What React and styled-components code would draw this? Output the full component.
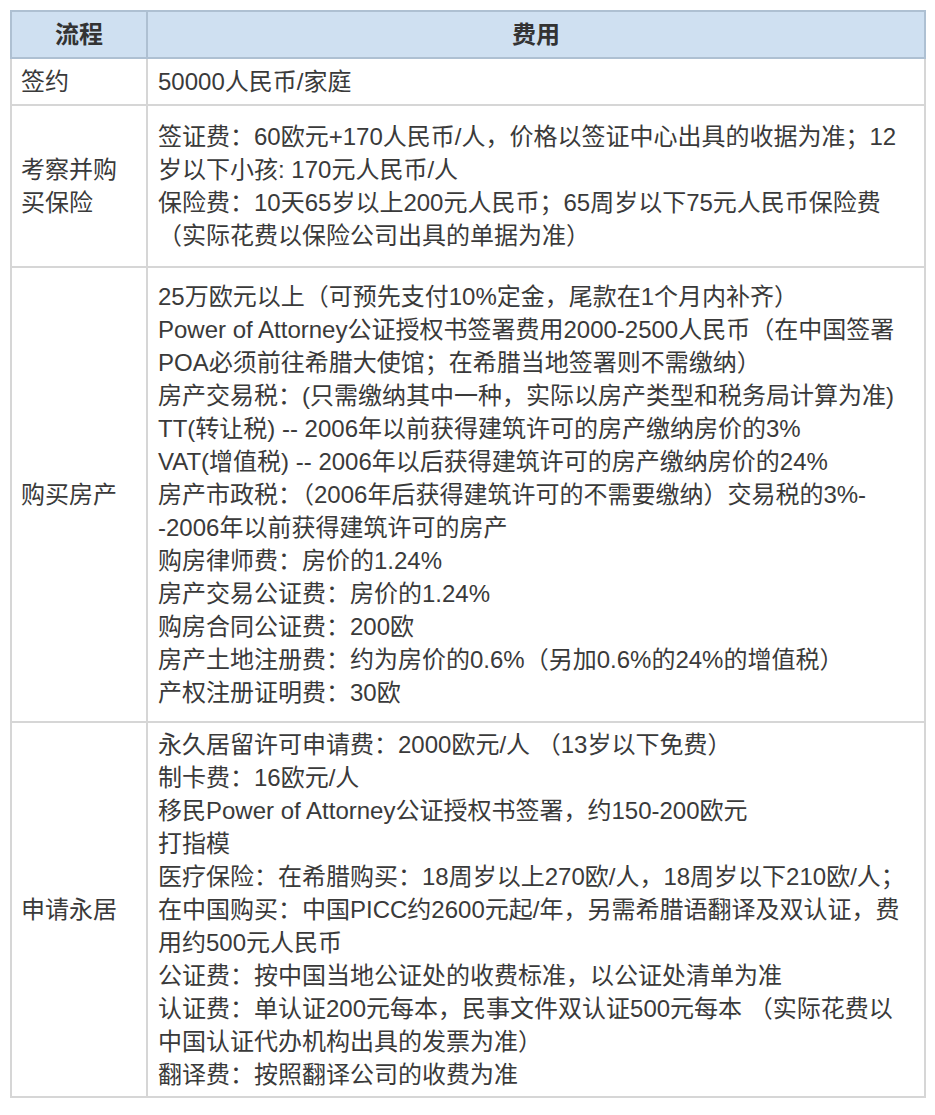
import styled, {createGlobalStyle} from "styled-components";

const GlobalStyle = createGlobalStyle`
	body {
		margin: 0;
		background: #ffffff;
		font-family: "Liberation Sans", "Noto Sans CJK SC", sans-serif;
		color: #3a3a3a;
	}
`

const Page = styled.div`
	padding: 10px 9px 10px 10px;
`

const FeeTable = styled.table`
	width: 916px;
	border-collapse: collapse;
	font-size: 24px;
	line-height: 33px;
`

const HeadCell = styled.th`
	background: #cfe0f1;
	border: 2px solid #aec0d2;
	padding: 6px 9px;
	font-weight: bold;
	text-align: center;
	color: #333333;
	width: ${({wide}) => wide ? 'auto' : '116px'};
`

const StepCell = styled.td`
	border: 2px solid #d6d6d6;
	padding: 0 9px;
	width: 116px;
	vertical-align: middle;
`

const FeeCell = styled.td`
	border: 2px solid #d6d6d6;
	padding: ${({pad}) => pad} 10px;
	vertical-align: middle;
`

const Line = styled.div`
	margin: 0;
`

const rows = [
	{
		step: '签约',
		pad: '6px',
		lines: ['50000人民币/家庭'],
	},
	{
		step: '考察并购买保险',
		pad: '14px',
		lines: [
			'签证费：60欧元+170人民币/人，价格以签证中心出具的收据为准；12岁以下小孩: 170元人民币/人',
			'保险费：10天65岁以上200元人民币；65周岁以下75元人民币保险费（实际花费以保险公司出具的单据为准）',
		],
	},
	{
		step: '购买房产',
		pad: '12px',
		lines: [
			'25万欧元以上（可预先支付10%定金，尾款在1个月内补齐）',
			'Power of Attorney公证授权书签署费用2000-2500人民币（在中国签署POA必须前往希腊大使馆；在希腊当地签署则不需缴纳）',
			'房产交易税：(只需缴纳其中一种，实际以房产类型和税务局计算为准)',
			'TT(转让税) -- 2006年以前获得建筑许可的房产缴纳房价的3%',
			'VAT(增值税) -- 2006年以后获得建筑许可的房产缴纳房价的24%',
			'房产市政税：（2006年后获得建筑许可的不需要缴纳）交易税的3%--2006年以前获得建筑许可的房产',
			'购房律师费：房价的1.24%',
			'房产交易公证费：房价的1.24%',
			'购房合同公证费：200欧',
			'房产土地注册费：约为房价的0.6%（另加0.6%的24%的增值税）',
			'产权注册证明费：30欧',
		],
	},
	{
		step: '申请永居',
		pad: '5px',
		lines: [
			'永久居留许可申请费：2000欧元/人 （13岁以下免费）',
			'制卡费：16欧元/人',
			'移民Power of Attorney公证授权书签署，约150-200欧元',
			'打指模',
			'医疗保险：在希腊购买：18周岁以上270欧/人，18周岁以下210欧/人；在中国购买：中国PICC约2600元起/年，另需希腊语翻译及双认证，费用约500元人民币',
			'公证费：按中国当地公证处的收费标准，以公证处清单为准',
			'认证费：单认证200元每本，民事文件双认证500元每本 （实际花费以中国认证代办机构出具的发票为准）',
			'翻译费：按照翻译公司的收费为准',
		],
	},
]

const App = () => {
	return (
		<Page>
			<GlobalStyle/>
			<FeeTable>
				<thead>
					<tr>
						<HeadCell>流程</HeadCell>
						<HeadCell wide>费用</HeadCell>
					</tr>
				</thead>
				<tbody>
					{rows.map((row) => (
						<tr key={row.step}>
							<StepCell>{row.step}</StepCell>
							<FeeCell pad={row.pad}>
								{row.lines.map((line) => <Line key={line}>{line}</Line>)}
							</FeeCell>
						</tr>
					))}
				</tbody>
			</FeeTable>
		</Page>
	)
}

export default App
